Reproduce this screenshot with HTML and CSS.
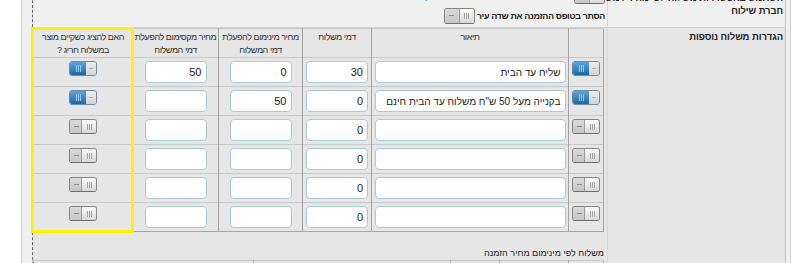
FILE: index.html
```html
<!DOCTYPE html>
<html lang="he" dir="rtl">
<head>
    <meta charset="UTF-8">
    <meta name="viewport" content="width=device-width, initial-scale=1.0">
    <title>הגדרות משלוח</title>
    <link rel="stylesheet" href="styles.css">
</head>
<body>
    <div class="settings">
        <div class="row row-top">
            <div class="label">השתמש באפשרויות משלוח לפי מחיר / משקל /<br>חברת שילוח</div>
            <div class="field">
                <div class="line">
                    <span class="toggle large off"><span class="knob"></span></span>
                    <a class="link" href="#">ניהול אפשרויות משלוח לפי מחיר / משקל / חברת שילוח</a>
                </div>
                <div class="line">
                    <b>הסתר בטופס ההזמנה את שדה עיר</b>
                    <span class="toggle large off"><span class="knob"></span></span>
                </div>
            </div>
        </div>

        <div class="row row-main">
            <div class="label">הגדרות משלוח נוספות</div>
            <div class="field">
                <div class="grid-wrap">
                    <table class="rates">
                        <colgroup>
                            <col class="c-switch">
                            <col class="c-desc">
                            <col class="c-fee">
                            <col class="c-min">
                            <col class="c-max">
                            <col class="c-special">
                        </colgroup>
                        <tr class="head">
                            <th></th>
                            <th>תיאור</th>
                            <th>דמי משלוח</th>
                            <th>מחיר מינימום להפעלת<br>דמי המשלוח</th>
                            <th>מחיר מקסימום להפעלת<br>דמי המשלוח</th>
                            <th>האם להציג כשקיים מוצר<br>במשלוח חריג ?</th>
                        </tr>
                        <tr>
                            <td class="switch"><span class="toggle on"><span class="knob"></span></span></td>
                            <td><input class="desc" type="text" value="שליח עד הבית"></td>
                            <td><input class="num" type="text" value="30"></td>
                            <td><input class="num" type="text" value="0"></td>
                            <td><input class="num" type="text" value="50"></td>
                            <td class="switch"><span class="toggle on"><span class="knob"></span></span></td>
                        </tr>
                        <tr>
                            <td class="switch"><span class="toggle on"><span class="knob"></span></span></td>
                            <td><input class="desc" type="text" value="בקנייה מעל 50 ש&quot;ח משלוח עד הבית חינם"></td>
                            <td><input class="num" type="text" value="0"></td>
                            <td><input class="num" type="text" value="50"></td>
                            <td><input class="num" type="text" value=""></td>
                            <td class="switch"><span class="toggle on"><span class="knob"></span></span></td>
                        </tr>
                        <tr>
                            <td class="switch"><span class="toggle off"><span class="knob"></span></span></td>
                            <td><input class="desc" type="text" value=""></td>
                            <td><input class="num" type="text" value="0"></td>
                            <td><input class="num" type="text" value=""></td>
                            <td><input class="num" type="text" value=""></td>
                            <td class="switch"><span class="toggle off"><span class="knob"></span></span></td>
                        </tr>
                        <tr>
                            <td class="switch"><span class="toggle off"><span class="knob"></span></span></td>
                            <td><input class="desc" type="text" value=""></td>
                            <td><input class="num" type="text" value="0"></td>
                            <td><input class="num" type="text" value=""></td>
                            <td><input class="num" type="text" value=""></td>
                            <td class="switch"><span class="toggle off"><span class="knob"></span></span></td>
                        </tr>
                        <tr>
                            <td class="switch"><span class="toggle off"><span class="knob"></span></span></td>
                            <td><input class="desc" type="text" value=""></td>
                            <td><input class="num" type="text" value="0"></td>
                            <td><input class="num" type="text" value=""></td>
                            <td><input class="num" type="text" value=""></td>
                            <td class="switch"><span class="toggle off"><span class="knob"></span></span></td>
                        </tr>
                        <tr>
                            <td class="switch"><span class="toggle off"><span class="knob"></span></span></td>
                            <td><input class="desc" type="text" value=""></td>
                            <td><input class="num" type="text" value="0"></td>
                            <td><input class="num" type="text" value=""></td>
                            <td><input class="num" type="text" value=""></td>
                            <td class="switch"><span class="toggle off"><span class="knob"></span></span></td>
                        </tr>
                    </table>
                    <div class="highlight"></div>
                </div>

                <div class="sub-title">משלוח לפי מינימום מחיר הזמנה</div>

                <table class="rates extra">
                    <colgroup>
                        <col class="c-switch">
                        <col class="c-small">
                        <col class="c-tiny">
                        <col class="c-desc">
                        <col>
                    </colgroup>
                    <tr>
                        <td class="switch"><span class="toggle off"><span class="knob"></span></span></td>
                        <td></td>
                        <td></td>
                        <td><input class="desc" type="text" value=""></td>
                        <td></td>
                    </tr>
                </table>
            </div>
        </div>
    </div>
</body>
</html>
```

FILE: styles.css
```css
body {
    margin: 0;
    background-color: #fff;
    font-family: "Liberation Sans", Arial, sans-serif;
    font-size: 9px;
    color: #222;
    direction: rtl;
    overflow: hidden;
}

.settings {
    margin: -14px 9px 0 0;
    width: 770px;
    box-sizing: border-box;
    border-left: 1px solid #d2d2d2;
    border-right: 1px solid #cdcdcd;
    padding: 0 4px 0 10px;
    background-color: #f0f0f0;
}

.row {
    display: grid;
    grid-template-columns: 179px 575px;
}

.row-top {
    background-color: #f0f0f0;
}

.row-main {
    background-color: #e6e6e6;
    border-top: 1px solid #cfcfcf;
}

.label {
    border-left: 1px solid #d6d6d6;
    border-right: 1px solid #bdbdbd;
    padding: 2px 2px 0 4px;
    font-size: 9.5px;
    font-weight: bold;
    line-height: 13px;
    letter-spacing: -0.1px;
    white-space: nowrap;
    color: #222;
}

.row-top .label {
    padding-top: 5px;
}

.field {
    border-left: 1px dashed #6a6a6a;
    padding: 0 3px 0 0;
}

.row-top .field {
    padding: 2px 2px 3px 0;
}

.line {
    display: flex;
    align-items: center;
    gap: 2px;
    height: 16px;
}

.line + .line {
    margin-top: 4px;
}

.line b {
    color: #222;
    letter-spacing: -0.4px;
}

.link {
    color: #3c84c6;
    text-decoration: none;
}

/* switches */
.toggle {
    display: inline-flex;
    direction: ltr;
    width: 28px;
    height: 15px;
    box-sizing: border-box;
    border: 1px solid #868686;
    border-bottom-color: #6f6f6f;
    border-radius: 3px;
    overflow: hidden;
    vertical-align: top;
}

.toggle.large {
    width: 31px;
    height: 16px;
}

.toggle::before {
    content: "";
    flex: 1;
}

.toggle.off::before {
    background:
        linear-gradient(#8c8c8c, #8c8c8c) no-repeat 4px 6px / 5px 1px,
        linear-gradient(#dadada, #c6c6c6);
}

.toggle.off .knob {
    width: 14px;
    border-left: 1px solid #9c9c9c;
    background:
        repeating-linear-gradient(90deg, #a4a4a4 0 1px, transparent 1px 2px) no-repeat center / 5px 6px,
        linear-gradient(#fbfbfb, #d8d8d8);
}

.toggle.on {
    border-color: #6f8aa3;
}

.toggle.on::before {
    background:
        linear-gradient(#b4b4b4, #b4b4b4) no-repeat 3px 6px / 4px 1px,
        linear-gradient(#ededed, #d4d4d4);
}

.toggle.on .knob {
    order: -1;
    width: 16px;
    background:
        repeating-linear-gradient(90deg, #9cc8ec 0 1px, transparent 1px 2px) no-repeat center / 5px 7px,
        linear-gradient(#5aa5de, #1f68a8);
}

/* rates table */
.grid-wrap {
    position: relative;
}

.rates {
    width: 100%;
    border-collapse: collapse;
    table-layout: fixed;
    border: 1px solid #a6a6a6;
}

.rates th,
.rates td {
    border-left: 1px solid #a3a3a3;
    border-right: 1px solid #a3a3a3;
    border-top: 1px solid #c9c9c9;
    padding: 0;
    text-align: center;
    vertical-align: middle;
}

.rates tr {
    height: 29px;
}

.rates th {
    font-weight: normal;
    vertical-align: top;
    padding-top: 2px;
    line-height: 13px;
    letter-spacing: -0.45px;
    white-space: nowrap;
    color: #333;
}

.rates td.switch {
    vertical-align: top;
    padding-top: 3px;
    line-height: 0;
}

.c-switch { width: 35px; }
.c-desc { width: 197px; }
.c-fee { width: 69px; }
.c-min { width: 84px; }
.c-max { width: 86px; }
.c-small { width: 69px; }
.c-tiny { width: 49px; }

.rates input {
    display: block;
    margin: 0 auto;
    height: 22px;
    box-sizing: border-box;
    border: 1px solid #a6cadb;
    border-radius: 4px;
    padding: 0 4px;
    background-color: #fff;
    font-family: "Liberation Sans", Arial, sans-serif;
    font-size: 10px;
    color: #222;
    text-align: right;
    direction: rtl;
}

.rates .num {
    width: 62px;
    font-size: 11px;
}

.rates .desc {
    width: 191px;
}

.highlight {
    position: absolute;
    left: -2px;
    top: -1px;
    width: 103px;
    height: 206px;
    box-sizing: border-box;
    border: 3px solid #fff200;
    pointer-events: none;
}

.sub-title {
    margin-top: 15px;
    line-height: 12px;
    color: #222;
}

.rates.extra {
    margin-top: 1px;
}

.rates.extra td {
    vertical-align: top;
    padding-top: 2px;
}
```
